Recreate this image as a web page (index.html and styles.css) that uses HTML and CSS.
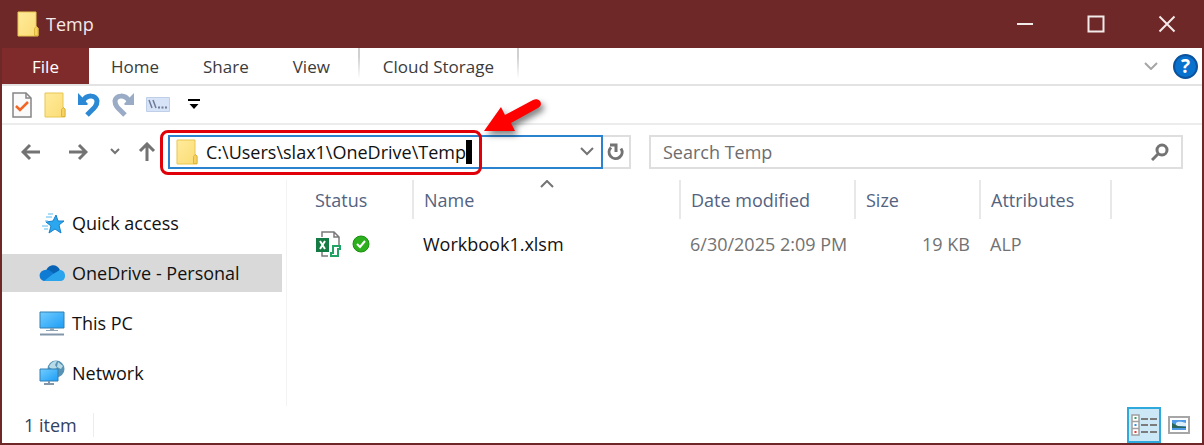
FILE: index.html
```
<!DOCTYPE html>
<html lang="en">
<head>
  <meta charset="UTF-8" />
  <meta name="viewport" content="width=device-width, initial-scale=1.0"/>
  <title>Temp</title>
  <link rel="stylesheet" href="styles.css">
</head>
<body>
  <!-- Shared folder icon -->
  <svg class="defs" aria-hidden="true">
    <defs>
      <linearGradient id="paper" x1="0" y1="0" x2="1" y2="1">
        <stop offset="0" stop-color="#ffeb9c" />
        <stop offset="1" stop-color="#fbdc74" />
      </linearGradient>
      <linearGradient id="screen" x1="0" y1="0" x2="1" y2="1">
        <stop offset="0" stop-color="#72cdff" />
        <stop offset="1" stop-color="#1d9df5" />
      </linearGradient>
      <symbol id="folder" viewBox="0 0 22 26">
        <path d="M1 1h18v14l2 2v8H1z" fill="url(#paper)" stroke="#e9c650" />
        <path d="M17.500 24.500v-7l1.500-2 2 1.500v7.500z" fill="#f6d260" stroke="#dfb63c" />
      </symbol>
    </defs>
  </svg>

  <div class="window">
    <header class="titlebar">
      <svg class="folder" aria-hidden="true"><use href="#folder" /></svg>
      <h1>Temp</h1>
      <div class="controls">
        <button aria-label="Minimize"><svg width="18" height="18"><path d="M1 9h16" /></svg></button>
        <button aria-label="Maximize"><svg width="18" height="18"><path d="M1.500 1.500h15v15h-15z" /></svg></button>
        <button aria-label="Close"><svg width="18" height="18"><path d="M1.500 1.500l15 15M16.500 1.500l-15 15" /></svg></button>
      </div>
    </header>

    <nav class="tabs">
      <button class="tab file">File</button>
      <button class="tab">Home</button>
      <button class="tab">Share</button>
      <button class="tab">View</button>
      <button class="tab cloud">Cloud Storage</button>
      <div class="tabs-end">
        <button aria-label="Expand the ribbon">
          <svg width="14" height="8"><path d="M1 1l6 6 6-6" fill="none" stroke="#a6a6a6" stroke-width="2" /></svg>
        </button>
        <button class="help" aria-label="Help">?</button>
      </div>
    </nav>

    <div class="quickbar">
      <button aria-label="Properties">
        <svg width="20" height="26">
          <path d="M1 1h13l5 5v19H1z" fill="#fafafa" stroke="#858585" stroke-width="1.500" />
          <path d="M14 1v5h5" fill="none" stroke="#858585" stroke-width="1.500" />
          <path d="M4 14l4 4 8-8" fill="none" stroke="#f26522" stroke-width="2.500" />
        </svg>
      </button>
      <button aria-label="New folder"><svg class="folder"><use href="#folder" /></svg></button>
      <button aria-label="Undo">
        <svg width="22" height="24">
          <path d="M5 8c4-7 13-6 14 0 0 5-3 7-10 14" fill="none" stroke="#2b88d4" stroke-width="5" />
          <path d="M0 0l3 3 7 8-1 1H0z" fill="#2b88d4" />
        </svg>
      </button>
      <button aria-label="Redo">
        <svg width="22" height="24">
          <path d="M17 8C13 1 4 2 3 8c0 5 3 7 10 14" fill="none" stroke="#9aabc6" stroke-width="5" />
          <path d="M22 0l-3 3-7 8 1 1h9z" fill="#9aabc6" />
        </svg>
      </button>
      <button aria-label="Map network drive">
        <svg width="24" height="15">
          <path d="M.5.5h23v14H.5z" fill="#d7e3f6" stroke="#bfcfe9" />
          <path d="M3 3l3 8M7 3l3 8" stroke="#6f7d98" stroke-width="1.500" />
          <path d="M12 10.500h9" stroke="#6f7d98" stroke-width="2" stroke-dasharray="2 1.500" />
        </svg>
      </button>
      <button class="more" aria-label="Customize toolbar">
        <svg width="12" height="11"><path d="M0 0h12v2H0zM1.500 5h9L6 10z" /></svg>
      </button>
    </div>

    <div class="addressbar">
      <button aria-label="Back"><svg width="20" height="18"><path d="M19 9H2M9 2L2 9l7 7" /></svg></button>
      <button class="forward" aria-label="Forward"><svg width="20" height="18"><path d="M1 9h17M11 2l7 7-7 7" /></svg></button>
      <button class="recent" aria-label="Recent locations"><svg width="10" height="7"><path d="M1 1l4 4 4-4" /></svg></button>
      <button class="up" aria-label="Up"><svg width="18" height="20"><path d="M9 19V2M2 9l7-7 7 7" /></svg></button>

      <div class="address">
        <svg class="folder" aria-hidden="true"><use href="#folder" /></svg>
        <input class="path" type="text" value="C:\Users\slax1\OneDrive\Temp" aria-label="Address">
        <span class="caret"></span>
        <button class="history" aria-label="Previous locations"><svg width="15" height="9"><path d="M1 1l6 6 6-6" /></svg></button>
        <div class="highlight"></div>
        <svg class="pointer" width="68" height="48" aria-hidden="true">
          <path d="M2 36L19 12l4 8 28-15c7-3 11 5 5 8L29 28l4 8z" fill="#fe0000" />
        </svg>
      </div>
      <button class="refresh" aria-label="Refresh">
        <svg width="18" height="20"><path d="M4 5.500a6.500 6.500 0 1 0 10 1M3 3h6v7" /></svg>
      </button>

      <div class="search">
        <input type="search" placeholder="Search Temp" aria-label="Search Temp">
        <svg width="18" height="18"><circle cx="11" cy="7" r="5" /><path d="M7 11l-6 6" /></svg>
      </div>
    </div>

    <main class="content">
      <nav class="sidebar">
        <a href="#quick">
          <svg width="26" height="26" viewBox="0 0 26 26">
            <path d="M17 5l2 6h6l-5 4 2 8-6-4-6 4 2-7-5-4 7-1z" fill="#2aa7ee" stroke="#1681cb" />
            <path d="M9 4h5M7 7h6M6 11h3M3 16h6M5 19h4" stroke="#5abcf0" />
          </svg>
          Quick access
        </a>
        <a class="selected" href="#onedrive">
          <svg width="26" height="26" viewBox="0 0 26 26">
            <path d="M7 11c2-7 11-8 14-1l-7 7z" fill="#0863b5" />
            <path d="M5 21c-6-1-6-10 1-11 3-1 6 1 9 4l-5 7z" fill="#0f7bd3" />
            <path d="M5 21l9-7 7-4c6 0 7 10 1 11z" fill="#2aa4ec" />
          </svg>
          OneDrive - Personal
        </a>
        <a href="#pc">
          <svg width="26" height="26" viewBox="0 0 26 26">
            <path d="M1 2h24v16H1z" fill="url(#screen)" stroke="#327fb2" />
            <path d="M11 18h4v2h4v1H7v-1h4z" fill="#8fa5b8" />
            <path d="M1 24.500h24" stroke="#8296aa" stroke-width="2" />
          </svg>
          This PC
        </a>
        <a href="#network">
          <svg width="26" height="26" viewBox="0 0 26 26">
            <circle cx="17" cy="9" r="8.500" fill="#5793b5" />
            <path d="M10 7c2-5 5-6 8-6l-2 4 2 3-4 2zM19 2l5 4-2 3-4-2z" fill="#b9dbe8" />
            <path d="M1 9h18v12H1z" fill="url(#screen)" stroke="#327fb2" />
            <path d="M9 21h2v2h4v2H5v-2h4z" fill="#8296aa" />
          </svg>
          Network
        </a>
      </nav>

      <div class="files">
        <table>
          <thead>
            <tr>
              <th class="col-status">Status</th>
              <th class="col-name">Name
                <svg class="sort" width="14" height="8"><path d="M1 7l6-6 6 6" /></svg>
              </th>
              <th class="col-date">Date modified</th>
              <th class="col-size">Size</th>
              <th class="col-attr">Attributes</th>
              <th class="col-rest"></th>
            </tr>
          </thead>
          <tbody>
            <tr>
              <td>
                <div class="status">
                  <svg width="26" height="26" aria-label="Excel workbook">
                    <path d="M7 6V1h12l5 5v8M19 1v5h5M7 20v5h6" fill="none" stroke="#7a7a7a" stroke-width="1.500" />
                    <path d="M1 7h13v14H1z" fill="#137b43" />
                    <path d="M5 10l5 8M10 10l-5 8" stroke="#fff" stroke-width="2" />
                    <path d="M18 15h7v3h-2v7h-7v-3h2z" fill="#fff" stroke="#21a366" stroke-width="2" />
                  </svg>
                  <svg width="18" height="18" aria-label="Available on this device">
                    <circle cx="9" cy="9" r="8" fill="#2cb01d" stroke="#199012" />
                    <path d="M5 9l3 3 5-6" fill="none" stroke="#fff" stroke-width="2" />
                  </svg>
                </div>
              </td>
              <td class="name">Workbook1.xlsm</td>
              <td>6/30/2025 2:09 PM</td>
              <td class="size">19 KB</td>
              <td>ALP</td>
              <td></td>
            </tr>
          </tbody>
        </table>
      </div>
    </main>

    <footer class="statusbar">
      <span class="count">1 item</span>
      <div class="views">
        <button class="active" aria-label="Details view">
          <svg width="26" height="22">
            <path d="M1 1h7v20H1zM1 7.500h7M1 14.500h7" fill="#fff" stroke="#a0a0a0" stroke-width="1.500" />
            <path d="M3.500 4h2" stroke="#3a9b62" stroke-width="2" />
            <path d="M3.500 11h2" stroke="#398ce0" stroke-width="2" />
            <path d="M3.500 18h2" stroke="#e23b3b" stroke-width="2" />
            <path d="M10 5h7m2 0h7M10 11h7m2 0h7M10 18h7m2 0h7" stroke="#7b7b7b" stroke-width="2" />
          </svg>
        </button>
        <button aria-label="Large icons view">
          <svg width="22" height="18">
            <path d="M1 1h20v16H1z" fill="#fff" stroke="#a6a6a6" stroke-width="2" />
            <path d="M4 4h14v10H4z" fill="#4f9be8" />
            <path d="M8 7c3-2 5-1 10 0v3H8z" fill="#dceefa" />
            <path d="M4 7l6 3 8 1v1H4z" fill="#2b6658" />
          </svg>
        </button>
      </div>
    </footer>
  </div>
</body>
</html>
```
FILE: styles.css
```
* {
  box-sizing: border-box;
}

body {
  margin: 0;
  font-family: "Open Sans", "Noto Sans", sans-serif;
  font-size: 18px;
  line-height: 24px;
  color: #111;
}

button {
  display: flex;
  align-items: center;
  justify-content: center;
  padding: 0;
  border: 0;
  background: none;
  font: inherit;
  color: inherit;
}

svg {
  display: block;
  flex: none;
}

.defs {
  position: absolute;
  width: 0;
  height: 0;
}

.folder {
  width: 22px;
  height: 26px;
}

.window {
  display: flex;
  flex-direction: column;
  min-height: 100vh;
  border: 2px solid #6f2828;
  border-top: 0;
  background: #fff;
}

/* title bar */
.titlebar {
  display: flex;
  align-items: center;
  gap: 7px;
  height: 48px;
  padding-left: 15px;
  background: #6f2828;
  color: #f3eaea;
}

.titlebar h1 {
  margin: 0;
  font-size: 18px;
  font-weight: 400;
}

.controls {
  display: flex;
  margin-left: auto;
}

.controls button {
  width: 71px;
  height: 48px;
}

.controls path {
  fill: none;
  stroke: #f3eaea;
  stroke-width: 2;
}

/* ribbon tabs */
.tabs {
  display: flex;
  height: 38px;
  border-bottom: 2px solid #e3e3e3;
  color: #3b3b3b;
}

.tab {
  padding: 2px 22px 0;
  font-size: 17px;
  white-space: nowrap;
}

.tab.file {
  width: 87px;
  background: #802b2b;
  color: #fff;
}

.tab.cloud {
  width: 161px;
  height: 30px;
  margin-left: 6px;
  padding: 8px 0 0;
  border: solid;
  border-width: 0 2px;
  border-image: linear-gradient(#d0d0d0 30%, #fff) 1;
}

.tabs-end {
  display: flex;
  align-items: center;
  gap: 15px;
  margin-left: auto;
  padding-right: 4px;
}

.help {
  width: 25px;
  height: 25px;
  border: 2px solid #0b519b;
  border-radius: 50%;
  background: #0870cd;
  color: #fff;
  font-size: 19px;
  font-weight: 700;
}

/* quick access toolbar */
.quickbar {
  display: flex;
  align-items: center;
  gap: 12px;
  height: 39px;
  padding-left: 10px;
  border-bottom: 2px solid #ececec;
}

.quickbar .more {
  margin-left: 6px;
}

/* navigation and address */
.addressbar {
  display: flex;
  align-items: center;
  height: 55px;
  padding: 0 19px 2px;
}

.addressbar path,
.addressbar circle {
  fill: none;
  stroke: #737373;
  stroke-width: 2;
}

.addressbar > button path {
  stroke-width: 3;
}

.addressbar > .recent path {
  stroke-width: 2;
}

.forward {
  margin-left: 27px;
}

.recent {
  margin-left: 22px;
}

.up {
  margin-left: 18px;
}

.address {
  position: relative;
  display: flex;
  align-items: center;
  flex: 419 1 0;
  height: 34px;
  margin-left: 12px;
  padding: 0 6px;
  border: 2px solid #2b83cf;
}

.path {
  field-sizing: content;
  min-width: 0;
  margin-left: 8px;
  padding: 0;
  border: 0;
  outline: 0;
  background: none;
  font: inherit;
  color: #111;
}

.caret {
  flex: none;
  width: 6px;
  height: 24px;
  background: #000;
}

.history {
  margin-left: auto;
}

.highlight {
  position: absolute;
  top: -7px;
  left: -10px;
  width: 322px;
  height: 45px;
  border: 3px solid #e00009;
  border-radius: 8px;
}

.address .pointer {
  position: absolute;
  top: -42px;
  left: 312px;
  filter: drop-shadow(3px 4px 3px rgba(0, 0, 0, 0.5));
}

.address .pointer path {
  fill: #fe0000;
  stroke: none;
}

.refresh {
  width: 28px;
  height: 34px;
  border: 2px solid #dedede;
  border-left: 0;
}

.search {
  display: flex;
  align-items: center;
  flex: 506 1 0;
  height: 34px;
  margin-left: 18px;
  padding: 0 12px;
  border: 2px solid #dedede;
}

.search input {
  flex: 1;
  min-width: 0;
  padding: 0;
  border: 0;
  outline: 0;
  background: none;
  font: inherit;
}

.search input::placeholder {
  color: #6d6d6d;
}

.search path,
.search circle {
  stroke-width: 3;
}

/* folder tree and file list */
.content {
  display: flex;
  flex: 1;
}

.sidebar {
  width: 285px;
  padding: 24px 4px 0 0;
  border-right: 1px solid #f3f3f3;
}

.sidebar a {
  display: flex;
  align-items: center;
  gap: 7px;
  height: 38px;
  margin-bottom: 12px;
  padding-left: 37px;
  color: #111;
  text-decoration: none;
}

.sidebar .selected {
  background: #d9d9d9;
}

.files {
  flex: 1;
  padding-left: 18px;
}

table {
  width: 100%;
  border-collapse: collapse;
  table-layout: fixed;
}

th {
  position: relative;
  height: 39px;
  padding: 0 10px;
  border-right: 2px solid #e8e8e8;
  color: #53637f;
  font-weight: 400;
  text-align: left;
}

td {
  height: 50px;
  padding: 0 10px;
  color: #727272;
  white-space: nowrap;
}

.col-status {
  width: 108px;
}

.col-name {
  width: 267px;
}

.col-date {
  width: 175px;
}

.col-size {
  width: 125px;
}

.col-attr {
  width: 131px;
}

.col-rest {
  border-right: 0;
}

.sort {
  position: absolute;
  top: 0;
  left: 50%;
  margin-left: -7px;
}

.sort path {
  fill: none;
  stroke: #737373;
  stroke-width: 2;
}

.status {
  display: flex;
  align-items: center;
  gap: 11px;
}

.name {
  color: #111;
}

.size {
  text-align: right;
}

/* status bar */
.statusbar {
  display: flex;
  align-items: center;
  height: 37px;
  padding: 0 10px 0 22px;
  color: #33415f;
}

.count {
  padding-right: 16px;
  border-right: 1px solid #ededed;
}

.views {
  display: flex;
  align-items: center;
  gap: 5px;
  margin-left: auto;
}

.views button {
  width: 26px;
  height: 36px;
}

.views .active {
  width: 34px;
  border: 2px solid #2fa8dc;
  background: #cce8f7;
}
```
